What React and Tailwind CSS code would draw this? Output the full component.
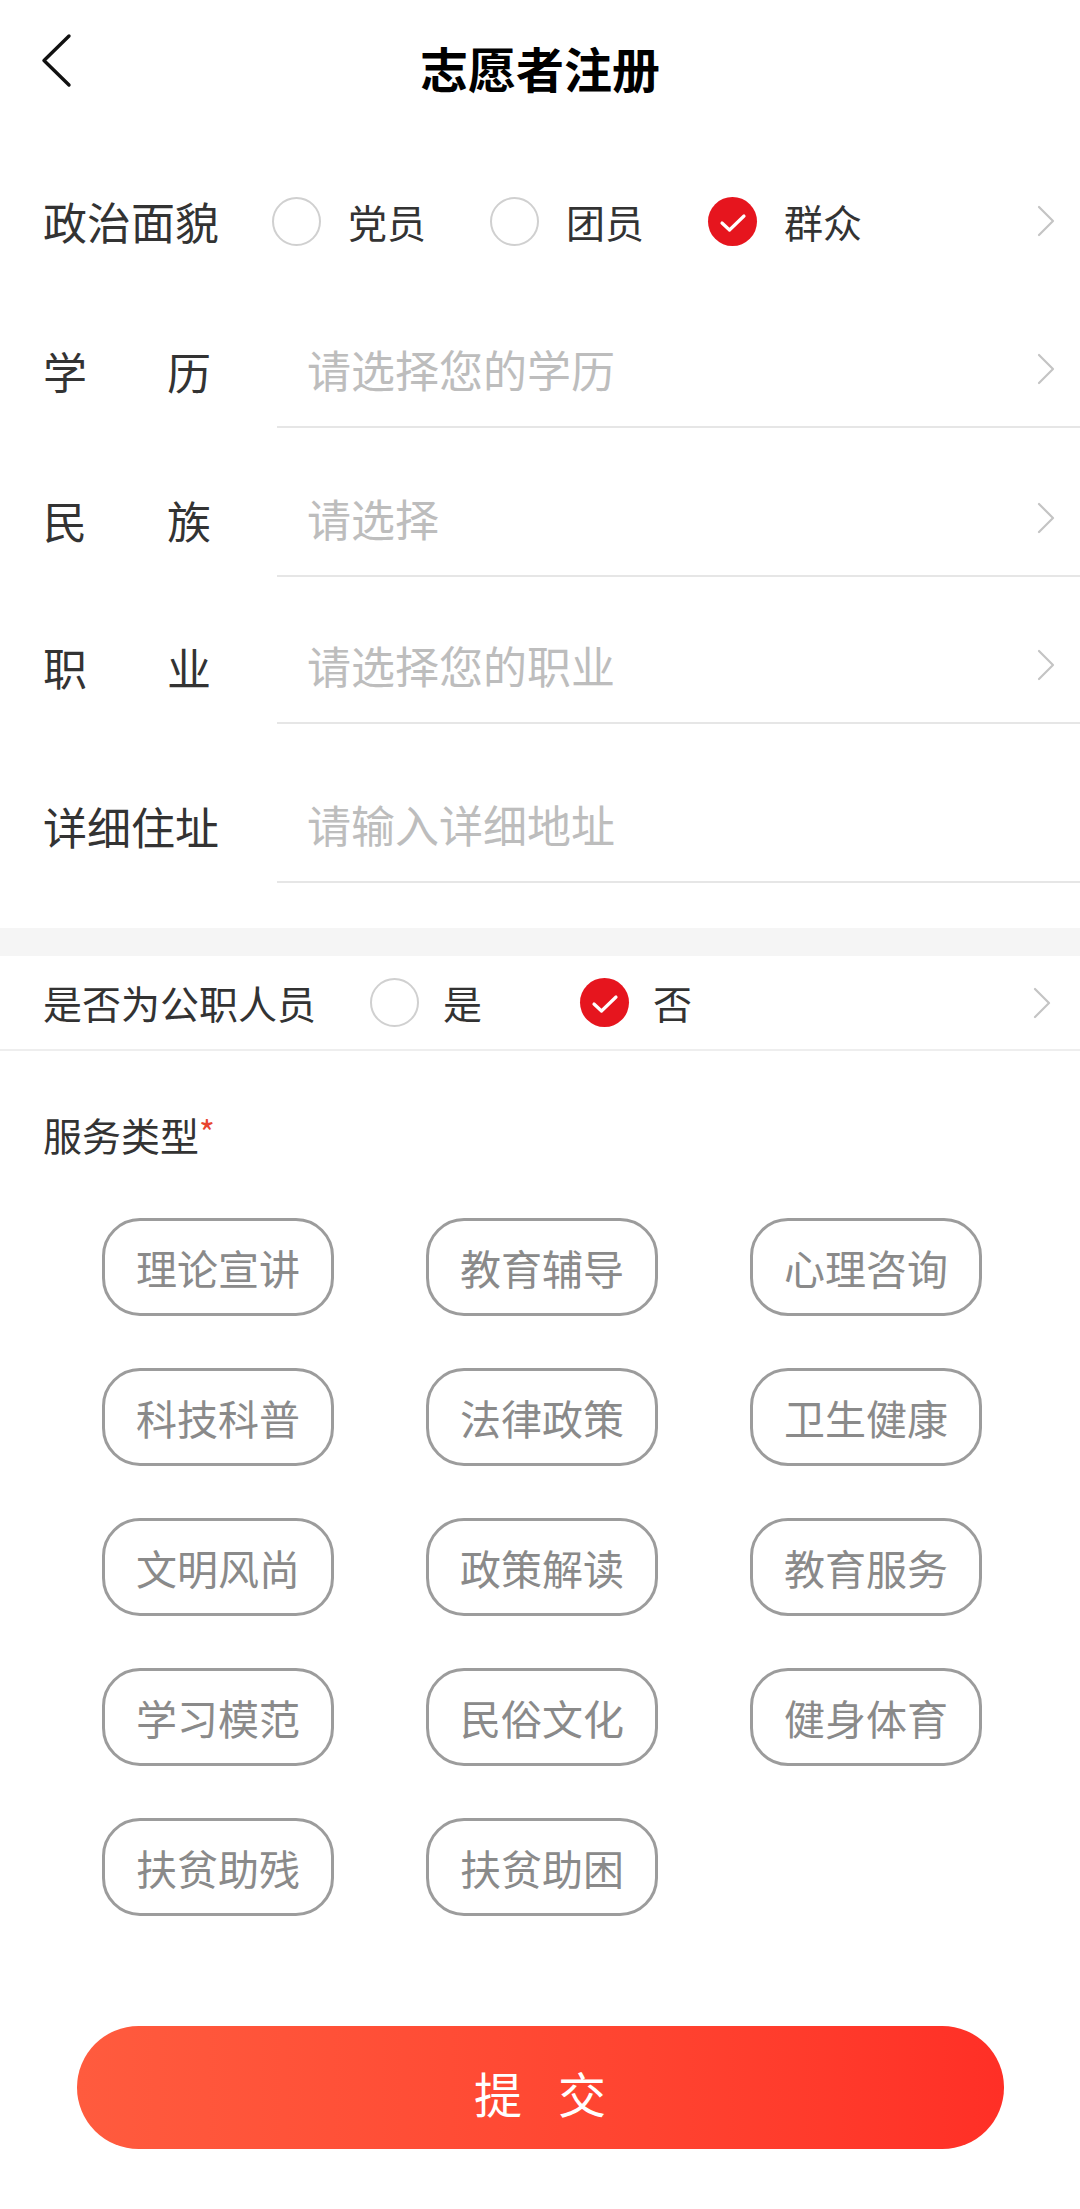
import React, { useState } from 'react';

const font = "font-['Noto_Sans_CJK_SC','Noto_Sans',sans-serif]";

const Chevron = () => (
    <svg width="20" height="32" viewBox="0 0 20 32" fill="none" className="shrink-0">
        <path d="M3 2 L17 16 L3 30" stroke="#c4c4c4" strokeWidth="2.2" strokeLinecap="round" strokeLinejoin="round" />
    </svg>
);

const Radio = ({ checked }) => (
    checked ? (
        <span className="w-[49px] h-[49px] rounded-full bg-[#e6151e] flex items-center justify-center shrink-0">
            <svg width="30" height="24" viewBox="0 0 30 24" fill="none" className="mt-[3px]">
                <path d="M4 12 L11.5 19 L26 5" stroke="#fff" strokeWidth="3.2" strokeLinecap="round" strokeLinejoin="round" />
            </svg>
        </span>
    ) : (
        <span className="w-[49px] h-[49px] rounded-full border-2 border-[#d0d0d0] shrink-0" />
    )
);

const SelectRow = ({ label, placeholder, rowH, chevron = true }) => (
    <div className={`flex items-end pl-[43px] ${rowH}`}>
        <div className="w-[234px] h-[114px] flex items-center">
            {label.length === 2 ? (
                <div className="w-[168px] flex justify-between text-[44px] leading-none text-[#333]">
                    <span>{label[0]}</span>
                    <span>{label[1]}</span>
                </div>
            ) : (
                <span className="text-[44px] leading-none text-[#333]">{label}</span>
            )}
        </div>
        <div className="flex-1 h-[116px] border-b-2 border-[#e6e6e6] flex items-center pl-[30px] pr-[24px]">
            <span className="flex-1 text-[44px] leading-none text-[#bdbdbd]">{placeholder}</span>
            {chevron && <Chevron />}
        </div>
    </div>
);

const tags = [
    '理论宣讲', '教育辅导', '心理咨询',
    '科技科普', '法律政策', '卫生健康',
    '文明风尚', '政策解读', '教育服务',
    '学习模范', '民俗文化', '健身体育',
    '扶贫助残', '扶贫助困',
];

export default function App() {
    const [political, setPolitical] = useState('群众');
    const [official, setOfficial] = useState('否');

    return (
        <div className={`${font} w-[1080px] min-h-[2209px] bg-white text-[#333]`}>
            {/* Header */}
            <div className="relative h-[134px] flex items-center justify-center">
                <svg className="absolute left-[40px] top-[33px]" width="34" height="56" viewBox="0 0 34 56" fill="none">
                    <path d="M29 3 L4 27.5 L29 52" stroke="#111" strokeWidth="3.4" strokeLinecap="round" strokeLinejoin="round" />
                </svg>
                <h1 className="text-[48px] font-bold leading-none text-black">志愿者注册</h1>
            </div>

            {/* 政治面貌 */}
            <div className="h-[174px] flex items-center pl-[43px] pr-[24px]">
                <span className="w-[229px] text-[44px] leading-none text-[#333]">政治面貌</span>
                <div className="flex-1 flex items-center">
                    {['党员', '团员', '群众'].map(o => (
                        <button key={o} onClick={() => setPolitical(o)} className="w-[218px] flex items-center gap-[27px]">
                            <Radio checked={political === o} />
                            <span className="text-[39px] leading-none text-[#333]">{o}</span>
                        </button>
                    ))}
                </div>
                <Chevron />
            </div>

            <SelectRow label="学历" placeholder="请选择您的学历" rowH="h-[120px]" />
            <SelectRow label="民族" placeholder="请选择" rowH="h-[149px]" />
            <SelectRow label="职业" placeholder="请选择您的职业" rowH="h-[147px]" />
            <SelectRow label="详细住址" placeholder="请输入详细地址" rowH="h-[159px]" chevron={false} />

            <div className="h-[45px]" />
            <div className="h-[28px] bg-[#f5f5f5]" />

            {/* 是否为公职人员 */}
            <div className="h-[95px] flex items-center pl-[43px] pr-[28px] border-b-2 border-[#eeeeee]">
                <span className="w-[327px] text-[39px] leading-none text-[#333]">是否为公职人员</span>
                <div className="flex-1 flex items-center">
                    {['是', '否'].map(o => (
                        <button key={o} onClick={() => setOfficial(o)} className="w-[210px] flex items-center gap-[24px]">
                            <Radio checked={official === o} />
                            <span className="text-[39px] leading-none text-[#333]">{o}</span>
                        </button>
                    ))}
                </div>
                <Chevron />
            </div>

            {/* 服务类型 */}
            <div className="pt-[64px] pl-[43px]">
                <span className="text-[39px] leading-none text-[#333]">服务类型</span>
                <span className="text-[34px] leading-none text-[#e8452f] align-top">*</span>
            </div>

            <div className="grid grid-cols-[232px_232px_232px] gap-x-[92px] gap-y-[52px] pl-[102px] pt-[62px]">
                {tags.map(t => (
                    <div key={t} className="h-[98px] rounded-[38px] border-[3px] border-[#9c9c9c] flex items-center justify-center">
                        <span className="text-[41px] leading-none text-[#8a8a8a]">{t}</span>
                    </div>
                ))}
            </div>

            {/* Submit */}
            <div className="pt-[110px] pb-[62px] flex justify-center">
                <button className="w-[927px] h-[123px] rounded-full bg-gradient-to-r from-[#ff5b3e] to-[#ff2f26] flex items-center justify-center gap-[36px] pt-[8px]">
                    <span className="text-[48px] leading-none text-white">提</span>
                    <span className="text-[48px] leading-none text-white">交</span>
                </button>
            </div>
        </div>
    );
}
